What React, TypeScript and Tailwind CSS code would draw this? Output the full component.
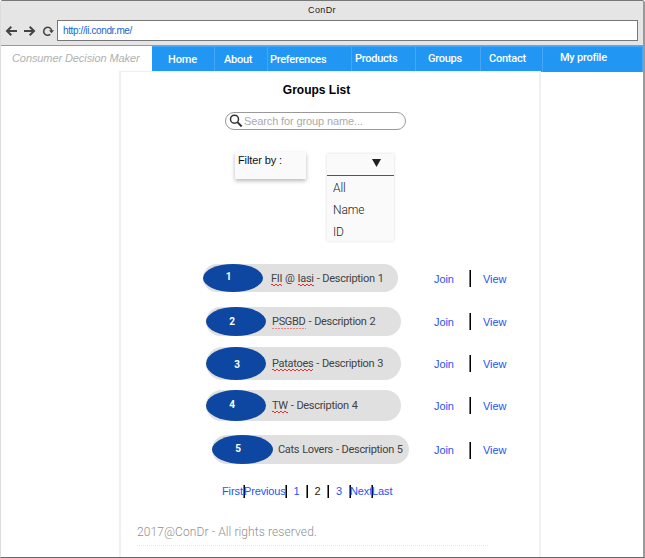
import React from "react";

const roboto = "font-['Roboto',sans-serif]";
const arial = "font-['Liberation_Sans',Arial,sans-serif]";

const navItems = [
  { label: "Home", cell: "w-[63px] pl-[16px] pt-[6px]", text: "tracking-[-0.1px]" },
  { label: "About", cell: "w-[53px] pl-[9px] pt-[6px]", text: "tracking-[-0.25px]" },
  { label: "Preferences", cell: "w-[84px] pl-[2px] pt-[6px]", text: "tracking-[-0.28px]" },
  { label: "Products", cell: "w-[64px] pl-[3px] pt-[5px]", text: "tracking-[-0.25px]" },
  { label: "Groups", cell: "w-[65px] pl-[12px] pt-[5px]", text: "tracking-[-0.25px]" },
  { label: "Contact", cell: "w-[62px] pl-[8px] pt-[5px]", text: "tracking-[-0.25px]" },
  { label: "My profile", cell: "flex-1 pl-[17px] pt-[4px]", text: "tracking-[-0.25px]" },
];

const groups = [
  { n: 1, parts: [["FII", 1], [" @ ", 0], ["Iasi", 1], [" - Description 1", 0]], row: "h-[28px] mt-[23px] pl-[82px]", pill: "w-[195px]", oval: "w-[60px]", num: "pb-[3px] pr-[9px]", desc: "pl-[8px] pt-[2px]", right: "w-[36px]", bar: "pt-[1px]" },
  { n: 2, parts: [["PSGBD", 2], [" - Description 2", 0]], row: "h-[29px] mt-[15px] pl-[85px]", pill: "w-[195px]", oval: "w-[60px]", num: "pr-[8px]", desc: "pl-[6px]", right: "w-[33px]", bar: "" },
  { n: 3, parts: [["Patatoes", 1], [" - Description 3", 0]], row: "h-[33px] mt-[11px] pl-[85px]", pill: "w-[195px]", oval: "w-[60px]", num: "pt-[3px] pl-[2px]", desc: "pl-[6px]", right: "w-[33px]", bar: "" },
  { n: 4, parts: [["TW", 1], [" - Description 4", 0]], row: "h-[31px] mt-[10px] pl-[85px]", pill: "w-[195px]", oval: "w-[60px]", num: "pb-[1px] pr-[8px]", desc: "pl-[6px]", right: "w-[33px]", bar: "" },
  { n: 5, parts: [["Cats Lovers - Description 5", 0]], row: "h-[29px] mt-[14px] pl-[91px]", pill: "w-[197px]", oval: "w-[61px]", num: "pb-[2px] pr-[9px]", desc: "pl-[5px]", right: "w-[25px]", bar: "pt-[1px]" },
];

function BackIcon() {
  return (
    <svg width="13" height="12" viewBox="0 0 13 12" fill="none" stroke="#444" strokeWidth="2">
      <path d="M12 6H2.5M6.3 1.8L2 6l4.3 4.2" />
    </svg>
  );
}

function ReloadIcon() {
  return (
    <svg width="13" height="12" viewBox="0 0 13 12" fill="none">
      <path d="M8.3 9.4A4 4 0 1 1 9.7 5.8" stroke="#444" strokeWidth="1.5" />
      <path d="M7 5.3h5L9.5 8.3z" fill="#444" />
    </svg>
  );
}

function Divider({ className = "" }: { className?: string }) {
  return <span className={`block w-[2px] shrink-0 border-l border-[#777] bg-black ${className}`} />;
}

function Misspelled({ faint, children }: { faint: boolean; children: React.ReactNode }) {
  return (
    <span className="relative inline-block">
      {children}
      {faint ? (
        <span className="absolute inset-x-0 bottom-0 h-px bg-[repeating-linear-gradient(90deg,#f08080_0_2px,transparent_2px_3px)]" />
      ) : (
        <>
          <span className="absolute inset-x-0 bottom-px h-px bg-[repeating-linear-gradient(90deg,#e83030_0_2px,transparent_2px_4px)]" />
          <span className="absolute inset-x-0 bottom-0 h-px bg-[repeating-linear-gradient(90deg,transparent_0_2px,#e83030_2px_4px)]" />
        </>
      )}
    </span>
  );
}

function GroupRow({ g }: { g: (typeof groups)[number] }) {
  return (
    <div className={`flex shrink-0 items-center ${g.row}`}>
      <div className={`flex h-full shrink-0 items-center rounded-full bg-[#e0e0e0] ${g.pill}`}>
        <div className={`flex h-full shrink-0 items-center justify-center rounded-[50%] bg-[#0d47a1] ${g.oval} ${g.num}`}>
          <span className={`${roboto} text-[10px] leading-none font-bold text-white`}>{g.n}</span>
        </div>
        <span className={`${roboto} ${g.desc} text-[11px] leading-[14px] tracking-[-0.3px] [word-spacing:0.5px] whitespace-pre text-[#424242]`}>
          {g.parts.map(([t, mark], i) => (mark ? <Misspelled key={i} faint={mark === 2}>{t}</Misspelled> : <span key={i}>{t}</span>))}
        </span>
      </div>
      <span className={`shrink-0 ${g.right}`} />
      <div className={`flex items-center ${arial} text-[11px] leading-[14px] tracking-[-0.1px] text-[#1d55f5] ${g.bar}`}>
        <span className="w-[35px]">Join</span>
        <Divider className="h-[17px]" />
        <span className="pl-[12px]">View</span>
      </div>
    </div>
  );
}

export default function App() {
  return (
    <div className="flex h-[558px] w-[645px] flex-col overflow-hidden rounded-t-[3px] border-t border-r-2 border-b border-l border-t-[#777] border-r-[#999] border-b-[#666] border-l-[#ddd] bg-white">
      <header className="h-[45px] shrink-0 border-b border-[#999] bg-[#e5e5e5]">
        <div className={`${arial} h-[19px] pt-[3px] text-center text-[9px] leading-[12px] tracking-[0.35px] text-[#222]`}>ConDr</div>
        <div className="flex items-center">
          <div className="flex w-[56px] items-center pl-[4px]">
            <BackIcon />
            <span className="ml-[5px] rotate-180"><BackIcon /></span>
            <span className="ml-[6px]"><ReloadIcon /></span>
          </div>
          <div className={`${arial} h-[21px] w-[581px] border border-[#777] bg-white pl-[5px] text-[10px] leading-[19px] tracking-[-0.38px] text-[#1565d8]`}>http://ii.condr.me/</div>
        </div>
      </header>

      <nav className="flex h-[25px] shrink-0">
        <div className={`${arial} w-[151px] pt-[4px] pl-[11px] text-[11px] leading-[16px] tracking-[-0.09px] whitespace-nowrap text-[#b0b0b0] italic`}>Consumer Decision Maker</div>
        {navItems.map((item) => (
          <a key={item.label} className={`${roboto} ${item.cell} h-[26px] border-t border-r border-[#45a6f7] bg-[#2196f3] text-[11px] leading-[14px] font-medium whitespace-nowrap text-white`}>
            <span className={item.text}>{item.label}</span>
          </a>
        ))}
      </nav>

      <main className="ml-[118px] flex w-[422px] flex-1 flex-col border-t border-r-2 border-l-2 border-[#f0f0f0]">
        <h1 className={`${arial} mt-[10px] pr-[27px] text-center text-[12px] leading-[16px] font-bold text-black`}>Groups List</h1>

        <div className="mt-[14px] ml-[104px] flex h-[18px] w-[181px] shrink-0 items-center rounded-full border border-[#999] pl-[3px]">
          <svg width="14" height="14" viewBox="0 0 14 14" fill="none" stroke="#333">
            <circle cx="5.5" cy="5.2" r="4" strokeWidth="1.5" />
            <path d="M8.4 8.1l4.3 4.4" strokeWidth="2" />
          </svg>
          <span className={`${arial} pl-[1px] text-[11px] leading-[16px] tracking-[-0.12px] text-[#aaa]`}>Search for group name...</span>
        </div>

        <div className="mt-[22px] flex h-[89px] shrink-0 pl-[114px]">
          <div className={`${arial} h-[27px] w-[71px] bg-[#fafafa] pt-px pl-[3px] text-[11px] leading-[14px] tracking-[-0.12px] text-[#111] shadow-[0_2px_4px_rgba(0,0,0,0.28)]`}>Filter by :</div>
          <div className="mt-[2px] ml-[21px] h-[87px] w-[67px] bg-[#fafafa] shadow-[0_0_3px_rgba(0,0,0,0.14)]">
            <div className="flex h-[22px] items-start justify-end border-b border-[#555] pt-[5px] pr-[13px]">
              <svg width="9" height="8" viewBox="0 0 9 8"><path d="M0 0h9L4.5 8z" fill="#212121" /></svg>
            </div>
            <ul className={`${roboto} pt-[1px] pl-[6px] text-[12px] leading-[22px] font-light tracking-[-0.1px] text-[#222]`}>
              <li>All</li>
              <li>Name</li>
              <li>ID</li>
            </ul>
          </div>
        </div>

        {groups.map((g) => <GroupRow key={g.n} g={g} />)}

        <div className={`${arial} mt-[20px] flex h-[14px] shrink-0 items-center pl-[101px] text-[11px] leading-[14px] tracking-[-0.1px] text-[#1d55f5]`}>
          <span className="w-[21px]">First</span>
          <Divider className="h-[13px]" />
          <span className="-ml-px w-[41px] tracking-[-0.15px]">Previous</span>
          <Divider className="h-[13px]" />
          <span className="w-[19px] text-center">1</span>
          <Divider className="h-[13px]" />
          <span className="w-[19px] text-center text-[#222]">2</span>
          <Divider className="h-[13px]" />
          <span className="w-[20px] text-center">3</span>
          <Divider className="h-[13px]" />
          <span className="-ml-px w-[21px] tracking-[-0.1px]">Next</span>
          <Divider className="h-[13px]" />
          <span className="-ml-px">Last</span>
        </div>

        <footer className={`${roboto} mt-[26px] ml-[16px] w-[351px] border-b border-dotted border-[#e5e5e5] pb-[5px] text-[12px] leading-[16px] font-light tracking-[0.1px] text-[#909090]`}>
          2017@ConDr - All rights reserved.
        </footer>
      </main>
    </div>
  );
}
